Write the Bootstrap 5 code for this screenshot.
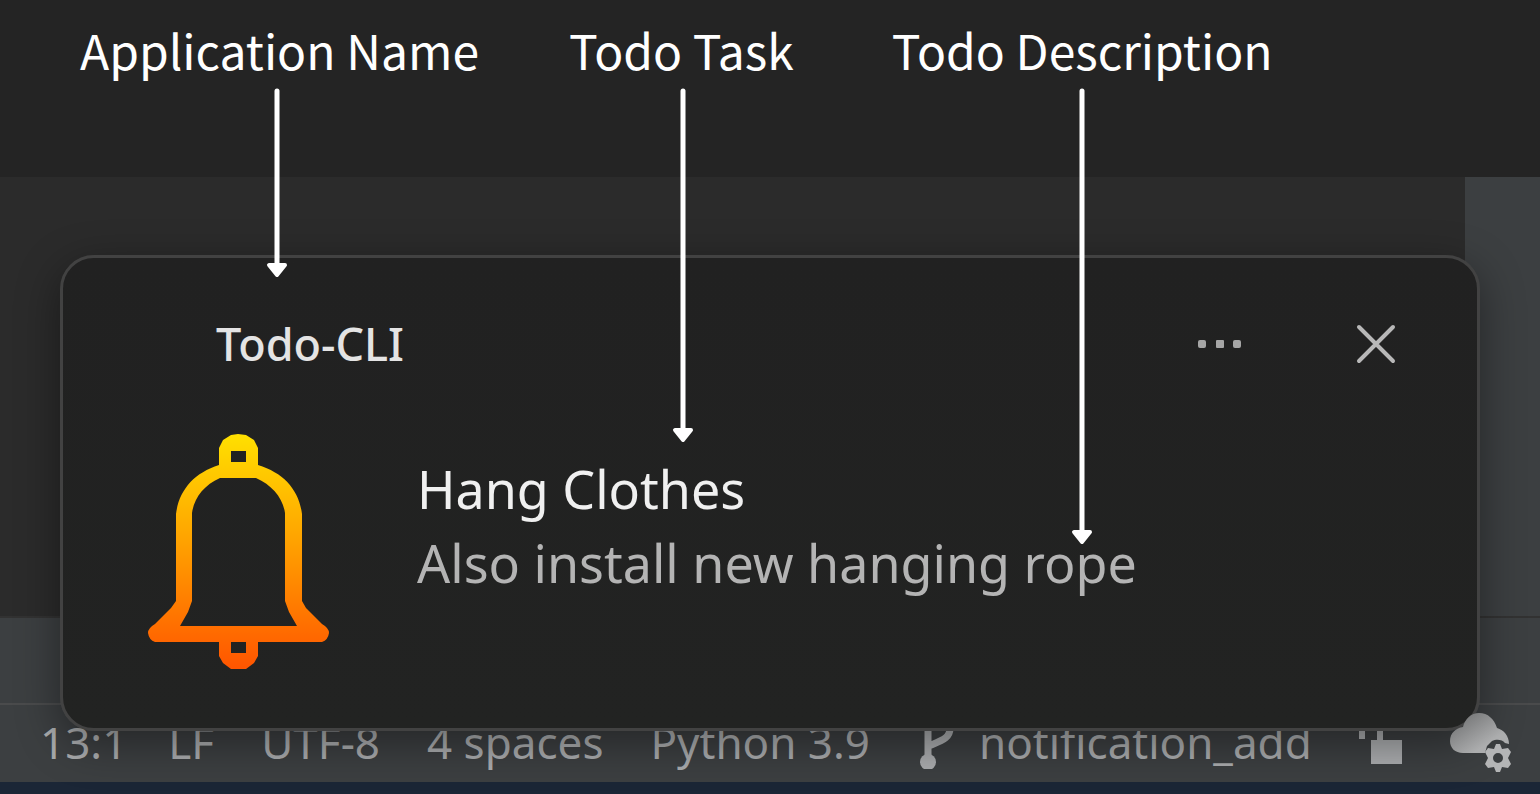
<!DOCTYPE html>
<html lang="en">
<head>
<meta charset="utf-8">
<meta name="viewport" content="width=device-width, initial-scale=1">
<title>Todo-CLI notification</title>
<link href="https://cdn.jsdelivr.net/npm/bootstrap@5.3.0/dist/css/bootstrap.min.css" rel="stylesheet">
<style>
  body { background: #242424; font-family: "Noto Sans", "Open Sans", sans-serif; overflow-x: hidden; }

  /* Captions and their arrows */
  .captions { z-index: 3; height: 177px; padding: 19px 80px 0; gap: 90px; font-family: "Noto Sans CJK SC", sans-serif; font-size: 48px; line-height: 60px; color: #fff; }
  .pointer { top: 69px; }

  /* Editor behind the notification */
  .code-area { background: #2b2b2b; }
  .gutter { width: 75px; background: #3c3f41; }
  .tool-panel { height: 87px; background: #3c3f41; border-top: 2px solid #323232; }
  .status-bar { height: 79px; background: #3c3f41; border-top: 2px solid #4a4b4c; padding: 0 0 4px 40px; font-size: 44px; line-height: 60px; color: #a9abad; gap: 47px; }
  .caret-pos { margin-right: -6px; }
  .branch { gap: 24px; }
  .sync { z-index: 2; }
  .desktop-edge { height: 12px; background: #1b2636; }

  /* Notification */
  .notice { top: 78px; left: 60px; right: 60px; z-index: 1; background: linear-gradient(#212121, #222322); border: 3px solid #424242; border-radius: 34px; padding: 56px 80px 59px 85px; box-shadow: 0 12px 44px rgba(0, 0, 0, .4); }
  .notice-app { padding-left: 68px; font-size: 45px; font-weight: 500; line-height: 60px; color: #e4e4e4; }
  .notice-actions { gap: 112px; }
  .notice-body { margin-top: 60px; gap: 88px; }
  .notice-text { margin-top: 18px; font-size: 52px; line-height: 74px; }
  .notice-task { color: #f0f0f0; }
  .notice-detail { color: #b4b4b4; }
</style>
<script src="https://cdn.jsdelivr.net/npm/bootstrap@5.3.0/dist/js/bootstrap.bundle.min.js" defer></script>
</head>
<body>
<div class="d-flex flex-column min-vh-100">

  <header class="captions d-flex align-items-start position-relative text-nowrap">
    <div class="position-relative">Application Name
      <svg class="pointer position-absolute start-50 translate-middle-x" width="26" height="190" viewBox="0 0 26 190" aria-hidden="true">
        <path d="M11 3V178" stroke="#fff" stroke-width="5" stroke-linecap="round"/>
        <path d="M3 177H19L11 187Z" fill="#fff" stroke="#fff" stroke-width="4" stroke-linejoin="round"/>
      </svg>
    </div>
    <div class="position-relative">Todo Task
      <svg class="pointer position-absolute start-50 translate-middle-x" width="26" height="355" viewBox="0 0 26 355" aria-hidden="true">
        <path d="M15 3V343" stroke="#fff" stroke-width="5" stroke-linecap="round"/>
        <path d="M7 342H23L15 352Z" fill="#fff" stroke="#fff" stroke-width="4" stroke-linejoin="round"/>
      </svg>
    </div>
    <div class="position-relative ms-2">Todo Description
      <svg class="pointer position-absolute start-50 translate-middle-x" width="22" height="458" viewBox="0 0 22 458" aria-hidden="true">
        <path d="M11 3V445" stroke="#fff" stroke-width="5" stroke-linecap="round"/>
        <path d="M3 444H19L11 454Z" fill="#fff" stroke="#fff" stroke-width="4" stroke-linejoin="round"/>
      </svg>
    </div>
  </header>

  <main class="position-relative flex-grow-1 d-flex flex-column">
    <div class="flex-grow-1 d-flex">
      <div class="code-area flex-grow-1"></div>
      <div class="gutter"></div>
    </div>
    <div class="tool-panel"></div>

    <footer class="status-bar d-flex align-items-center text-nowrap">
      <span class="caret-pos">13:1</span>
      <span>LF</span>
      <span>UTF-8</span>
      <span>4 spaces</span>
      <span>Python 3.9</span>
      <span class="branch d-flex align-items-center">
        <svg width="38" height="54" viewBox="0 0 38 54" fill="none" aria-hidden="true">
          <path d="M11 6V46M33 8V13C33 23 26 25 12 31" stroke="#a9abad" stroke-width="7"/>
          <circle cx="11" cy="47" r="8" fill="#a9abad"/>
          <circle cx="11" cy="7" r="7" fill="#a9abad"/>
          <circle cx="32" cy="7" r="7" fill="#a9abad"/>
        </svg>
        notification_add
      </span>
      <svg width="44" height="46" viewBox="0 0 44 46" fill="none" aria-hidden="true">
        <path d="M3 20V12C3 0 21 0 21 12V24" stroke="#a9abad" stroke-width="6"/>
        <path d="M12 21H43V45H12Z" fill="#a9abad"/>
      </svg>
      <svg class="sync position-relative" width="64" height="64" viewBox="0 -3 64 64" aria-hidden="true">
        <defs>
          <linearGradient id="cloudFill" x1="0" y1="0" x2="1" y2="1">
            <stop offset=".2" stop-color="#7c7d7e"/>
            <stop offset=".7" stop-color="#acadae"/>
          </linearGradient>
        </defs>
        <path d="M13 40C5 40 0 35 0 28C0 20 6 15 13 14C15 6 21 0 29 0C38 0 44 6 47 15C54 17 59 23 59 31L55 30C52 26 46 26 42 28L37 33L35 40Z" fill="url(#cloudFill)"/>
        <path d="M46 31H50L52 36L58 35L61 39L58 45L61 51L58 55L52 54L50 59H46L44 54L38 55L35 51L38 45L35 39L38 35L44 36ZM48 40A5 5 0 1 0 48 50A5 5 0 1 0 48 40Z" fill="#b4b5b6" fill-rule="evenodd"/>
      </svg>
    </footer>
    <div class="desktop-edge"></div>

    <section class="notice position-absolute" role="alert">
      <div class="d-flex align-items-center justify-content-between">
        <div class="notice-app">Todo-CLI</div>
        <div class="notice-actions d-flex align-items-center">
          <button type="button" class="btn border-0 p-0 d-flex" aria-label="More options">
            <svg width="48" height="40" viewBox="0 0 48 40" fill="#a6a6a6" aria-hidden="true">
              <rect x="3" y="16" width="8" height="8" rx="2"/>
              <rect x="21" y="16" width="8" height="8" rx="1"/>
              <rect x="38" y="16" width="8" height="8" rx="2"/>
            </svg>
          </button>
          <button type="button" class="btn border-0 p-0 d-flex" aria-label="Close">
            <svg width="42" height="42" viewBox="0 0 42 42" fill="none" stroke="#b8b8b8" stroke-width="4" stroke-linecap="round" aria-hidden="true">
              <path d="M4 4L38 38M38 4L4 38"/>
            </svg>
          </button>
        </div>
      </div>
      <div class="notice-body d-flex align-items-start">
        <svg class="flex-shrink-0" width="181" height="235" viewBox="0 0 181 235" aria-hidden="true">
          <defs>
            <linearGradient id="bellFill" x1="0" y1="0" x2="0" y2="1">
              <stop offset="0" stop-color="#ffe000"/>
              <stop offset=".5" stop-color="#ff9c00"/>
              <stop offset="1" stop-color="#ff5500"/>
            </linearGradient>
          </defs>
          <path fill="url(#bellFill)" fill-rule="evenodd" d="M71 31V14L75 6L83 1L90 0L98 1L106 6L110 14V31C136 39 151 56 154 80V167L158 174L174 190Q181 194 181 199Q180 206 174 208H110V222L106 229L98 235H83L75 229L71 222V208H7Q1 206 0 199Q0 194 7 190L23 174L28 167V80C31 56 46 39 71 31ZM83 17V28H98V17ZM83 208V219H98V208ZM44 167V79C46 64 56 51 72 44H108C124 51 135 64 137 79V167L141 178L149 192H32L40 178Z"/>
        </svg>
        <div class="notice-text text-nowrap">
          <div class="notice-task">Hang Clothes</div>
          <div class="notice-detail">Also install new hanging rope</div>
        </div>
      </div>
    </section>
  </main>
</div>
</body>
</html>
